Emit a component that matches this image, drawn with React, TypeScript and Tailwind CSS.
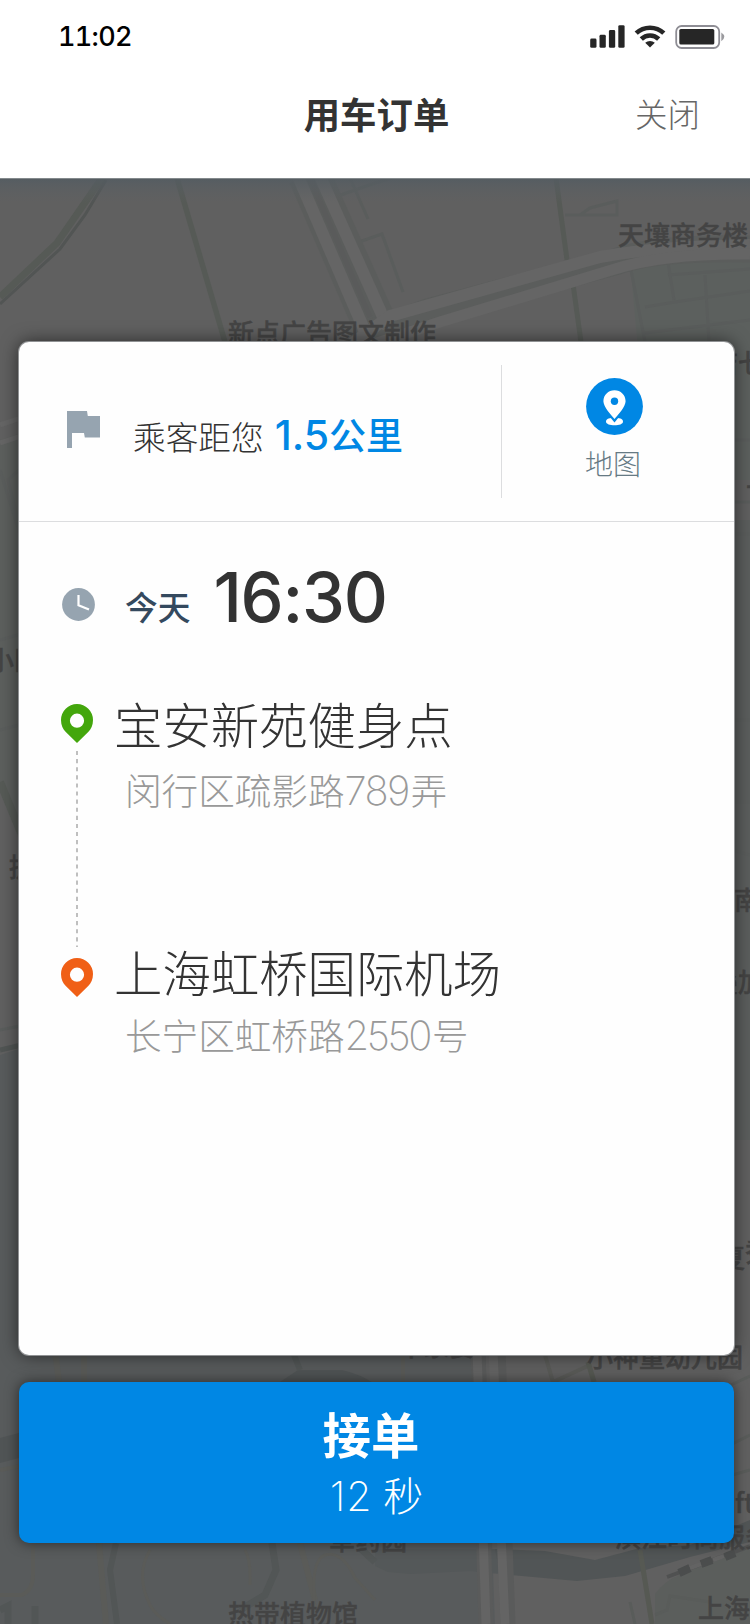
import React from 'react';

const CJK = "font-['Noto_Sans_CJK_SC',sans-serif]";

function SignalIcon() {
  return (
    <svg className="h-[23px] w-[35px]" viewBox="0 0 35 23" fill="#262626">
      <rect x="0.2" y="13.6" width="6.3" height="9.2" rx="1.4" />
      <rect x="9.5" y="9.8" width="6.3" height="13" rx="1.4" />
      <rect x="18.9" y="5" width="6.3" height="17.8" rx="1.4" />
      <rect x="28.3" y="0.2" width="6.3" height="22.6" rx="1.4" />
    </svg>
  );
}

function WifiIcon() {
  return (
    <svg className="ml-[9px] h-[23px] w-[32px]" viewBox="0 0 32 23" fill="none" stroke="#262626">
      <path d="M2.2 8.2 A20 20 0 0 1 29.8 8.2" strokeWidth="4.6" />
      <path d="M7.3 14 A12.4 12.4 0 0 1 24.7 14" strokeWidth="4.6" />
      <path d="M16 22.6 L11.2 17.8 A7 7 0 0 1 20.8 17.8 Z" fill="#262626" stroke="none" />
    </svg>
  );
}

function BatteryIcon() {
  return (
    <svg className="ml-[9px] h-[24px] w-[50px]" viewBox="0 0 50 24">
      <rect x="1.2" y="1" width="43" height="22" rx="5.5" fill="none" stroke="#8e8d94" strokeWidth="1.8" />
      <rect x="4.3" y="4" width="35" height="15.6" rx="1.6" fill="#262626" />
      <path d="M46.3 7.5 Q49.3 9.5 49.3 11.8 T46.3 16.2 Z" fill="#9a9a9e" />
    </svg>
  );
}

function Pin({ className }: { className: string }) {
  return (
    <svg className={'h-[39px] w-[32px] ' + className} viewBox="0 0 32 39">
      <path
        fill="currentColor"
        fillRule="evenodd"
        d="M16 0 A16 16 0 0 1 32 16 C32 21.5 30 25 27.2 28 L16 39 L4.8 28 C2 25 0 21.5 0 16 A16 16 0 0 1 16 0 Z M16 9.6 A7.1 7.1 0 1 0 16 23.8 A7.1 7.1 0 1 0 16 9.6 Z"
      />
    </svg>
  );
}

function MapBackdrop() {
  return (
    <svg className="absolute inset-0 h-full w-full" viewBox="0 179 750 1445" preserveAspectRatio="none" fill="none">
      <defs>
        <linearGradient id="top" x1="0" y1="0" x2="0" y2="1">
          <stop offset="0" stopColor="#535c62" stopOpacity="0.85" />
          <stop offset="1" stopColor="#5c6063" stopOpacity="0" />
        </linearGradient>
      </defs>
      <rect y="178" width="750" height="1446" fill="#606060" />
      <path d="M0 440 L30 430 V860 L0 790 Z" fill="#5c5f5d" />
      <path d="M630 262 L668 258 L750 256 V480 L650 480 Z" fill="#5c605e" />
      <path d="M715 520 H750 V1140 H715 Z" fill="#5b5e5d" />
      <path d="M0 1055 L30 1045 L480 1200 L495 1624 H0 Z" fill="#585b5c" />
      <path d="M280 1382 L298 1370 H342 Q360 1374 375 1384 Z M0 1438 L30 1430 V1455 L0 1463 Z" fill="#505455" />
      <path d="M375 1566 L388 1572 L410 1574 L470 1571 L500 1574 V1549 H375 Z" fill="#545859" />
      <path d="M495 1549 L545 1551 L595 1560 L640 1548 L690 1545 L750 1520 V1542 L690 1557 L625 1576 L577 1581 L500 1574 Z" fill="#515556" />
      <path d="M655 1594 Q665 1580 682 1574 L750 1548 V1624 H655 Z" fill="#5b5e5c" />

      <g stroke="#565a56">
        <path d="M102 178 L57 243 L0 297" strokeWidth="7" />
        <path d="M106 180 L85 215 L60 249 L0 304" strokeWidth="3" stroke="#525554" />
        <path d="M177 178 L225 342" strokeWidth="5.5" />
        <path d="M556 178 L567 260 M573 284 L581 342" strokeWidth="5" />
        <path d="M0 782 L28 850" strokeWidth="8" />
      </g>
      <g stroke="#5a5d5c" strokeWidth="3">
        <path d="M335 197 L375 183 L392 178 M350 178 L368 219 M353 244 L382 234 L403 292" />
        <path d="M565 215 H617 V201 L590 208 L580 215" />
        <path d="M630 265 L645 342 M668 262 L674 300 M645 307 L675 302 L750 291 M668 275 L750 269 M705 275 L709 342 M645 333 L750 320" />
        <path d="M0 470 L28 560 L8 480 L30 460 M0 730 L30 722 M0 640 L28 632 M0 1030 L30 1024" />
        <path d="M715 440 H750 M735 502 H750 M735 534 H750 M735 720 H750 M735 802 H750 M715 845 L750 855" />
      </g>
      <path d="M0 1050 L30 1043" stroke="#515554" strokeWidth="5" />
      <path d="M0 425 L30 415 M0 443 L30 433" stroke="#656565" strokeWidth="5" />
      <g stroke="#5b5d5c" strokeWidth="25">
        <path d="M301 178 L370 337" />
        <path d="M320 178 L388 330" />
        <path d="M350 341 L428 312 L615 262 Q655 247 750 249" strokeWidth="27" />
      </g>
      <g stroke="#656565">
        <path d="M297 174 L373 350" strokeWidth="12" />
        <path d="M319 174 L388 328" strokeWidth="12" />
        <path d="M350 345 L390 316 L600 257 Q660 246 750 245" strokeWidth="12" />
        <path d="M350 352 L440 322 L615 269 Q665 253 750 254" strokeWidth="11" />
      </g>
      <path d="M310 178 L370 317" stroke="#5a5b5b" strokeWidth="4.5" />

      <g stroke="#5a5b58" strokeWidth="4">
        <path d="M54 1342 L59 1382 M84 1342 V1382 M99 1543 L106 1624 M300 1543 L315 1600" strokeWidth="6" />
        <path d="M0 1595 H22 Q33 1590 33 1575 V1545" />
        <path d="M150 1550 Q135 1575 150 1605 Q155 1615 170 1624 M245 1550 Q251 1560 250 1585 M315 1610 Q310 1560 325 1555 Q342 1550 355 1578 L375 1600" strokeWidth="3" />
        <path d="M0 1470 L30 1464 M403 1350 V1382 M545 1355 L553 1382 L590 1365" />
      </g>
      <path d="M116 1543 L110 1570 L117 1624 M294 1355 L300 1370" stroke="#525656" strokeWidth="6" />
      <path d="M272 1543 L276 1570 L265 1595 L240 1610 M0 1610 L8 1606 V1624 M35 1606 V1624 M360 1548 L375 1562" stroke="#525656" strokeWidth="7" />
      <g>
        <path d="M478 1350 L486 1624 M498 1350 L508 1624" stroke="#5a5b5b" strokeWidth="15" />
        <path d="M477 1350 L486 1624 M493 1350 L505 1624" stroke="#646464" strokeWidth="9" />
      </g>
      <path d="M588 1362 L594 1382 M640 1550 L652 1624" stroke="#565953" strokeWidth="5" />
      <path d="M630 1602 L635 1624 M655 1615 L667 1610 L670 1596 L710 1602 M720 1390 L750 1376 M720 1450 L750 1435 M715 1480 L750 1470" stroke="#595c5a" strokeWidth="3" />
      <path d="M667 1577 L750 1546" stroke="#505151" strokeWidth="4" />
      <path d="M679 1573 L690 1568 M701 1564 L712 1560 M725 1557 L735 1553" stroke="#4b4d4d" strokeWidth="8" />
      <path d="M690 1568 L701 1564 M713 1560 L724 1556" stroke="#636363" strokeWidth="4" />

      <g fill="#444" stroke="#444" strokeWidth="0.4" fontSize="26" fontWeight="500" fontFamily="'Noto Sans CJK SC', sans-serif">
        <text x="618" y="245">天壤商务楼</text>
        <text x="228" y="343">新点广告图文制作</text>
        <text x="712" y="373">店七</text>
        <text x="746" y="487">上</text>
        <text x="-12" y="670">小区</text>
        <text x="9" y="877">提</text>
        <text x="734" y="910">南</text>
        <text x="712" y="992">叠加</text>
        <text x="719" y="1268">夏</text>
        <text x="745" y="1262">秀</text>
        <text x="397" y="1356">车家宴</text>
        <text x="587" y="1367">小神童幼儿园</text>
        <text x="329" y="1550">草药园</text>
        <text x="615" y="1547">滨江时尚服务</text>
        <text x="735" y="1513">ft</text>
        <text x="228" y="1624">热带植物馆</text>
        <text x="698" y="1618">上海</text>
      </g>
      <rect y="178" width="750" height="25" fill="url(#top)" />
    </svg>
  );
}

function Header() {
  return (
    <header className="h-[178px] bg-white">
      <div className="flex h-[72px] items-center pl-[58px]">
        <span className="font-[Inter,sans-serif] text-[27px] leading-none font-medium tracking-[-0.7px] text-black tabular-nums">
          11:02
        </span>
        <div className="ml-auto flex items-center pt-[1px] pr-[25px]">
          <SignalIcon />
          <WifiIcon />
          <BatteryIcon />
        </div>
      </div>
      <div className="grid h-[82px] grid-cols-[1fr_auto_1fr] items-center pl-[3px]">
        <h1 className="col-start-2 text-[36.4px] leading-none font-bold text-[#333]">用车订单</h1>
        <button className="mr-[50px] justify-self-end text-[32.5px] leading-none font-light text-[#666]">关闭</button>
      </div>
    </header>
  );
}

function Distance() {
  return (
    <div className="flex h-[180px] border-b border-[#dcdddf]">
      <div className="flex w-[482px] pl-[48px]">
        <svg className="mt-[69px] h-[37px] w-[33px]" viewBox="0 0 33 37" fill="#96a4b0">
          <path d="M0 0 H20 L20.8 5 H33 V26.5 H17.8 L17 22 H5 V37 H0 Z" />
        </svg>
        <p className="mt-[71px] ml-[33px] flex h-[48px] items-baseline leading-[42px]">
          <span className="text-[32.7px] font-light text-[#333]">乘客距您</span>
          <span className="ml-[11px] font-[Inter,sans-serif] text-[41px] font-medium text-[#0087e4]">1.5</span>
          <span className="text-[37px] font-medium text-[#0087e4]">公里</span>
        </p>
      </div>
      <div className="mt-[23px] h-[133px] w-px bg-[#dcdddf]" />
      <button className="flex flex-1 flex-col items-center pt-[36px] pr-[7px]">
        <svg className="h-[57px] w-[57px]" viewBox="0 0 57 57">
          <circle cx="28.5" cy="28.5" r="28.4" fill="#0087e4" />
          <path d="M20 43.4 C20 40.5 24 40 28.5 40 S37 40.5 37 43.4 C37 46 33 47.2 28.5 47.2 S20 46 20 43.4 Z" fill="#fff" />
          <path
            fill="#fff"
            stroke="#0087e4"
            strokeWidth="4.5"
            paintOrder="stroke"
            d="M28.5 12.3 C34.7 12.3 39.6 17.1 39.6 23.2 C39.6 28.5 32 37 28.5 41 C25 37 17.4 28.5 17.4 23.2 C17.4 17.1 22.3 12.3 28.5 12.3 Z"
          />
          <circle cx="28.5" cy="23.2" r="3.7" fill="#0087e4" />
        </svg>
        <span className="mt-[14px] mr-[3px] text-[28px] leading-none font-light text-[#667a84]">地图</span>
      </button>
    </div>
  );
}

function Card() {
  return (
    <main className="mx-[19px] h-[1013px] w-[715px] rounded-[10px] bg-[#fefefe] shadow-[0_0_0_1px_#909294,0_0_18px_rgba(0,0,0,0.6)]">
      <Distance />
      <div className="flex h-[130px] pl-[43px]">
        <svg className="mt-[66px] h-[33px] w-[33px]" viewBox="0 0 33 33" fill="none">
          <circle cx="16.5" cy="16.5" r="16.4" fill="#96a4b0" />
          <path d="M16.5 7 V17.2 L27 21.5" stroke="#fff" strokeWidth="2.2" />
        </svg>
        <p className="mt-[46px] ml-[30px] flex h-[60px] items-baseline leading-[60px]">
          <span className="relative -top-[2px] text-[32.7px] font-medium text-[#34495e]">今天</span>
          <span className="ml-[23px] font-[Inter,sans-serif] text-[68.5px] font-medium tracking-[-1.2px] text-[#333]">
            16:30
          </span>
        </p>
      </div>
      <div className="flex pl-[42px]">
        <div className="flex flex-col items-center pt-[52px]">
          <Pin className="text-[#43a60c]" />
          <svg className="my-[8px] h-[199px] w-[2px]" viewBox="0 0 2 199">
            <path d="M1 0 V196" stroke="#bfbfbf" strokeWidth="2" strokeDasharray="4.1 4" />
          </svg>
          <Pin className="text-[#f05f16]" />
        </div>
        <div className="flex flex-col pt-[47px] pl-[21px] leading-none">
          <h2 className="text-[48.4px] leading-[48px] font-light text-[#333]">宝安新苑健身点</h2>
          <p className="mt-[23px] ml-[11px] flex items-baseline font-light text-[#999]">
            <span className="text-[36.6px] leading-[38px]">闵行区疏影路</span>
            <span className="font-[Inter,sans-serif] text-[40px] leading-[38px] font-extralight tracking-[-1.6px]">789</span>
            <span className="ml-[2px] text-[36.4px] leading-[38px]">弄</span>
          </p>
          <h2 className="mt-[137px] text-[48.4px] leading-[48px] font-light text-[#333]">上海虹桥国际机场</h2>
          <p className="mt-[20px] ml-[11px] flex items-baseline font-light text-[#999]">
            <span className="text-[36.6px] leading-[38px]">长宁区虹桥路</span>
            <span className="font-[Inter,sans-serif] text-[40px] leading-[38px] font-extralight tracking-[-2.4px]">2550</span>
            <span className="ml-[2px] text-[36.4px] leading-[38px]">号</span>
          </p>
        </div>
      </div>
    </main>
  );
}

export default function App() {
  return (
    <div className={'flex h-[1624px] w-[750px] flex-col overflow-hidden ' + CJK}>
      <Header />
      <div className="relative flex-1 border-t border-[#83898c]">
        <MapBackdrop />
        <div className="relative pt-[163px]">
          <Card />
          <button className="mx-[19px] mt-[27px] flex h-[161px] w-[715px] flex-col items-center rounded-[10px] bg-[#0087e4] pt-[27px] text-white shadow-[0_0_14px_rgba(0,0,0,0.55)]">
            <span className="mr-[11px] text-[48.4px] leading-[48px] font-bold">接单</span>
            <span className="mt-[15px] flex items-baseline">
              <span className="font-[Inter,sans-serif] text-[41px] leading-[44px] font-extralight tracking-[0.8px]">12</span>
              <span className="ml-[11px] text-[40px] leading-[44px] font-light">秒</span>
            </span>
          </button>
        </div>
      </div>
    </div>
  );
}
